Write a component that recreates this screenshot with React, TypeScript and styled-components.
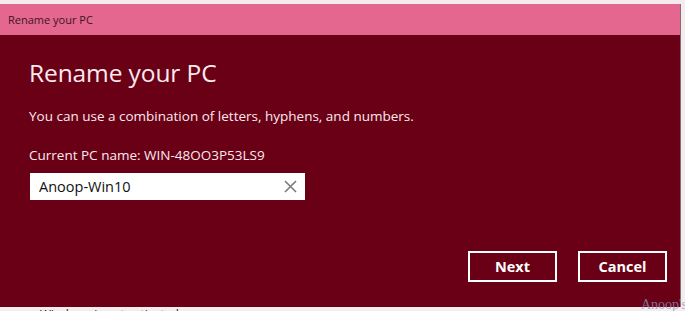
import React, { useState } from "react";
import styled, { createGlobalStyle } from "styled-components";

const GlobalStyle = createGlobalStyle`
  html, body {
    margin: 0;
    padding: 0;
    background: #f4ecef;
    overflow: hidden;
  }
  body {
    font-family: "Open Sans", "Noto Sans", "Liberation Sans", sans-serif;
  }
`;

const Screen = styled.div`
  position: relative;
  width: 685px;
  height: 311px;
  padding-top: 4px;
  box-sizing: border-box;
  background: #f4ecef;
  overflow: hidden;
`;

const Window = styled.section`
  width: 680px;
  height: 303px;
  border-right: 1px solid #8a6a74;
  display: flex;
  flex-direction: column;
  background: #6a0016;
`;

const TitleBar = styled.header`
  height: 31px;
  flex-shrink: 0;
  background: #e4678f;
  display: flex;
  align-items: center;
  padding-left: 8px;
  font-size: 11px;
  color: #3e1424;
`;

const Body = styled.div`
  flex: 1;
  display: flex;
  flex-direction: column;
  padding: 22px 0 0 29px;
  color: #fbe9ee;
`;

const Heading = styled.h1`
  margin: 0;
  font-size: 24.5px;
  font-weight: 400;
  line-height: 32px;
  letter-spacing: -0.1px;
`;

const Text = styled.p<{ $top: number }>`
  margin: ${(p) => p.$top}px 0 0;
  font-size: 13.5px;
  line-height: 18px;
`;

const Field = styled.div`
  margin-top: 9px;
  margin-left: 1px;
  width: 275px;
  height: 27px;
  background: #fff;
  display: flex;
  align-items: center;
  box-sizing: border-box;
  padding: 0 6px 0 9px;
`;

const Input = styled.input`
  flex: 1;
  border: none;
  outline: none;
  background: transparent;
  font-family: inherit;
  font-size: 14.5px;
  color: #111;
  padding: 0;
  caret-color: #000;
`;

const Clear = styled.button`
  width: 18px;
  height: 18px;
  border: none;
  background: none;
  padding: 0;
  display: flex;
  align-items: center;
  justify-content: center;
  cursor: pointer;
`;

const Actions = styled.div`
  display: flex;
  justify-content: flex-end;
  gap: 21px;
  margin-top: 51px;
  padding-right: 13px;
`;

const Button = styled.button`
  width: 89px;
  height: 31px;
  box-sizing: border-box;
  border: 2px solid #fff;
  background: transparent;
  color: #fff;
  font-family: inherit;
  font-weight: 700;
  font-size: 14.5px;
  cursor: pointer;
`;

const Watermark = styled.span`
  position: absolute;
  right: -2px;
  bottom: -2px;
  font-family: "Liberation Serif", serif;
  font-size: 14px;
  color: rgba(140, 150, 190, 0.75);
`;

const Behind = styled.span`
  position: absolute;
  left: 40px;
  bottom: -12px;
  font-size: 12px;
  color: #222;
`;

export default function App() {
  const [name, setName] = useState("Anoop-Win10");

  return (
    <>
      <GlobalStyle />
      <Screen>
        <Behind>Windows is not activated</Behind>
        <Window>
          <TitleBar>Rename your PC</TitleBar>
          <Body>
            <Heading>Rename your PC</Heading>
            <Text $top={18}>
              You can use a combination of letters, hyphens, and numbers.
            </Text>
            <Text $top={21}>Current PC name: WIN-48OO3P53LS9</Text>
            <Field>
              <Input value={name} onChange={(e) => setName(e.target.value)} />
              <Clear onClick={() => setName("")} aria-label="Clear">
                <svg width="13" height="13" viewBox="0 0 13 13">
                  <path
                    d="M1 1 L12 12 M12 1 L1 12"
                    stroke="#7a7a7a"
                    strokeWidth="1.6"
                    fill="none"
                  />
                </svg>
              </Clear>
            </Field>
            <Actions>
              <Button>Next</Button>
              <Button>Cancel</Button>
            </Actions>
          </Body>
        </Window>
        <Watermark>Anoop's</Watermark>
      </Screen>
    </>
  );
}
